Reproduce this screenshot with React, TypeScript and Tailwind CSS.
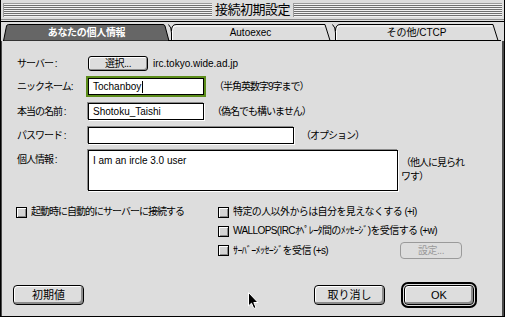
import React from "react";

const FONT = "font-['Liberation_Sans','Noto_Sans_CJK_JP',sans-serif]";

function Stripes() {
  return (
    <div className="flex-1 h-[14px] border-t border-l border-[#9a9a9a] bg-[repeating-linear-gradient(to_bottom,#f2f2f2_0px,#f2f2f2_1px,#707070_1px,#707070_2px)]" />
  );
}

function ActiveTab({ w, label }: { w: number; label: string }) {
  return (
    <div className="relative h-[17px] flex items-center justify-center shrink-0" style={{ width: w }}>
      <svg className="absolute inset-0" width={w} height={17}>
        <path
          d={`M0.5 17 L3.5 2 Q4 0.5 5.5 0.5 L${w - 7} 0.5 Q${w - 5.5} 0.5 ${w - 5} 2 L${w - 1} 17 Z`}
          fill="#666666"
          stroke="#000"
        />
      </svg>
      <span className="relative text-white font-bold text-[10px] tracking-[-0.3px] leading-none pt-[1px]">{label}</span>
    </div>
  );
}

function Tab({ w, label, cls }: { w: number; label: string; cls?: string }) {
  return (
    <div className={`relative h-[17px] flex items-center justify-center shrink-0 ${cls ?? ""}`} style={{ width: w }}>
      <svg className="absolute inset-0" width={w} height={17}>
        <path
          d={`M3 16.5 L3 6 Q3 0.5 8 0.5 L${w - 8} 0.5 L${w - 3} 16.5 Z`}
          fill="#dddddd"
        />
        <path d={`M4.5 16 L4.5 6 Q4.5 2 8.5 2 L${w - 9} 2`} fill="none" stroke="#ffffff" />
        <path d={`M0.5 0.5 Q3.5 3 3.5 9 L3.5 16.5`} fill="none" stroke="#000" />
        <path d={`M3.5 7 Q3.5 0.5 8 0.5 L${w - 8} 0.5 L${w - 3} 16.5`} fill="none" stroke="#000" />
        <path d={`M0 16.5 L${w} 16.5`} fill="none" stroke="#000" />
      </svg>
      <span className="relative text-black text-[10px] leading-none">{label}</span>
    </div>
  );
}

function Field({ w, h, focus, children }: { w: number; h: number; focus?: boolean; children?: React.ReactNode }) {
  const ring = focus
    ? "shadow-[0_0_0_2px_#5c8d1a]"
    : "shadow-[-1px_-1px_0_#8a8a8a,1px_1px_0_#ffffff]";
  return (
    <div
      className={`bg-white border border-black shrink-0 pl-[4px] text-[10px] text-black leading-none ${ring}`}
      style={{ width: w, height: h }}
    >
      {children}
    </div>
  );
}

function Check() {
  return (
    <span className="w-[11px] h-[11px] border border-black bg-[#d4d4d4] shadow-[inset_1px_1px_0_#ffffff,inset_-1px_-1px_0_#8a8a8a] shrink-0" />
  );
}

function Btn({ w, children }: { w: number; children: React.ReactNode }) {
  return (
    <div
      className="h-[20px] border border-black rounded-[4px] bg-[#dddddd] shadow-[inset_1px_1px_0_#ffffff,inset_-2px_-2px_0_#8c8c8c] flex items-center justify-center text-[11px] text-black leading-none shrink-0"
      style={{ width: w }}
    >
      {children}
    </div>
  );
}

export default function App() {
  return (
    <div className={`relative w-[505px] h-[317px] bg-[#dddddd] border-x border-b border-black flex flex-col overflow-hidden ${FONT}`}>
      {/* title bar */}
      <div className="h-[20px] flex items-center px-[2px] border-b border-[#8a8a8a] shrink-0">
        <Stripes />
        <span className="px-[3px] text-[13px] leading-none text-black tracking-[-0.5px]">接続初期設定</span>
        <Stripes />
      </div>
      <div className="h-[1px] mt-[1px] bg-black shrink-0" />
      {/* tabs */}
      <div className="mt-[2px] h-[17px] pl-[2px] flex shrink-0">
        <ActiveTab w={167} label="あなたの個人情報" />
        <Tab w={165} label="Autoexec" cls="-ml-[2px]" />
        <Tab w={169} label="その他/CTCP" cls="-ml-[1px]" />
      </div>
      {/* panel */}
      <div className="flex-1 flex flex-col border-l border-r-2 border-[#4a4a4a] text-black">
        {/* server */}
        <div className="mt-[15px] h-[15px] flex items-center pl-[15px]">
          <span className="w-[71px] text-[10px] tracking-[-1px] leading-none">サーバー :</span>
          <div className="w-[60px] h-[15px] border border-black rounded-[3px] bg-[#dddddd] shadow-[inset_1px_1px_0_#ffffff,inset_-1px_-1px_0_#8c8c8c] flex items-center justify-center text-[10px] leading-none tracking-[-0.5px]">
            選択...
          </div>
          <span className="ml-[5px] text-[10px] leading-none">irc.tokyo.wide.ad.jp</span>
        </div>
        {/* nick */}
        <div className="mt-[7px] h-[17px] flex items-center pl-[15px]">
          <span className="w-[71px] text-[10px] tracking-[-1px] leading-none">ニックネーム:</span>
          <Field w={116} h={17} focus>
            <div className="h-full flex items-center">
              <span>Tochanboy</span>
              <span className="w-[1px] h-[12px] bg-black ml-[1px]" />
            </div>
          </Field>
          <span className="ml-[10px] text-[10px] tracking-[-1px] leading-none">（半角英数字9字まで）</span>
        </div>
        {/* real name */}
        <div className="mt-[8px] h-[17px] flex items-center pl-[15px]">
          <span className="w-[71px] text-[10px] tracking-[-1px] leading-none">本当の名前 :</span>
          <Field w={116} h={17}>
            <div className="h-full flex items-center">Shotoku_Taishi</div>
          </Field>
          <span className="ml-[8px] text-[10px] tracking-[-1px] leading-none">（偽名でも構いません）</span>
        </div>
        {/* password */}
        <div className="mt-[7px] h-[17px] flex items-center pl-[15px]">
          <span className="w-[71px] text-[10px] tracking-[-1px] leading-none">パスワード :</span>
          <Field w={206} h={17} />
          <span className="ml-[7px] text-[10px] tracking-[-1px] leading-none">（オプション）</span>
        </div>
        {/* info */}
        <div className="mt-[6px] h-[41px] flex items-start pl-[15px]">
          <span className="w-[71px] text-[10px] tracking-[-1px] leading-none mt-[5px]">個人情報 :</span>
          <Field w={310} h={41}>
            <div className="pt-[5px]">I am an ircle 3.0 user</div>
          </Field>
          <div className="ml-[3px] mt-[6px] text-[10px] tracking-[-1px] leading-[14px]">
            <div>（他人に見られ</div>
            <div>ワす）</div>
          </div>
        </div>
        {/* checkboxes */}
        <div className="mt-[15px] flex pl-[14px]">
          <div className="w-[202px] flex flex-col">
            <div className="h-[12px] flex items-center">
              <Check />
              <span className="ml-[4px] text-[10px] tracking-[-1px] leading-none">起動時に自動的にサーバーに接続する</span>
            </div>
          </div>
          <div className="flex flex-col">
            <div className="h-[12px] flex items-center">
              <Check />
              <span className="ml-[4px] text-[10px] tracking-[-0.6px] leading-none">特定の人以外からは自分を見えなくする (+i)</span>
            </div>
            <div className="mt-[7px] h-[12px] flex items-center">
              <Check />
              <span className="ml-[4px] text-[10px] tracking-[-0.6px] leading-none">WALLOPS(IRCｵﾍﾟﾚｰﾀ間のﾒｯｾｰｼﾞ)を受信する (+w)</span>
            </div>
            <div className="mt-[5px] h-[17px] w-[244px] flex items-center justify-between">
              <div className="flex items-center">
                <Check />
                <span className="ml-[4px] text-[10px] tracking-[-0.6px] leading-none">ｻｰﾊﾞｰﾒｯｾｰｼﾞを受信 (+s)</span>
              </div>
              <div className="w-[62px] h-[17px] border border-[#9a9a9a] rounded-[4px] flex items-center justify-center text-[10px] text-[#9a9a9a] leading-none tracking-[-0.5px]">
                設定...
              </div>
            </div>
          </div>
        </div>
        {/* bottom buttons */}
        <div className="mt-[23px] h-[26px] flex items-center pl-[11px] pr-[25px]">
          <Btn w={71}>初期値</Btn>
          <div className="flex-1" />
          <Btn w={71}>取り消し</Btn>
          <div className="ml-[16px] border-2 border-black rounded-[7px] p-[1px] shrink-0">
            <Btn w={70}>OK</Btn>
          </div>
        </div>
      </div>
      {/* mouse cursor */}
      <svg className="absolute left-[247px] top-[292px]" width="12" height="18" viewBox="0 0 12 18">
        <path d="M0.5 0.5 L0.5 14 L3.5 11.2 L5.8 16.5 L8 15.5 L5.8 10.5 L10 10.5 Z" fill="#000" stroke="#fff" strokeWidth="1" />
      </svg>
    </div>
  );
}
